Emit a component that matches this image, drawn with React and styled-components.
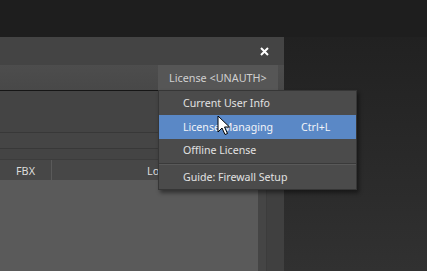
import React from "react";
import styled, { createGlobalStyle } from "styled-components";

const Global = createGlobalStyle`
  html, body { margin: 0; padding: 0; }
  body {
    width: 427px; height: 271px; overflow: hidden;
    font-family: "Noto Sans", "Open Sans", sans-serif;
  }
`;

const Page = styled.div`
  position: relative;
  width: 427px;
  height: 271px;
  display: flex;
  flex-direction: column;
  background: #1e1e1e;
  overflow: hidden;
`;

const TopGap = styled.div`
  height: 37px;
  flex: none;
`;

const Stage = styled.div`
  flex: 1;
  display: flex;
  background: linear-gradient(#212121, #313131);
`;

const Window = styled.div`
  width: 284px;
  display: flex;
  flex-direction: column;
  background: #444;
`;

const Rest = styled.div`
  flex: 1;
`;

const TitleBar = styled.div`
  height: 28px;
  display: flex;
  align-items: center;
  justify-content: flex-end;
  padding-right: 15px;
  background: #444;
`;

const Toolbar = styled.div`
  height: 25px;
  display: flex;
  justify-content: flex-end;
  padding-right: 6px;
  background: linear-gradient(#4d4d4d, #484848);
  border-bottom: 1px solid #161616;
`;

const LicenseButton = styled.div`
  width: 120px;
  display: flex;
  align-items: center;
  padding-left: 11px;
  box-sizing: border-box;
  background: #565656;
  color: #d0d0d0;
  font-size: 10.8px;
`;

const Band = styled.div`
  height: ${(p) => p.h}px;
  background: ${(p) => p.bg || "#444"};
  border-bottom: 1px solid ${(p) => p.line || "transparent"};
`;

const Header = styled.div`
  height: 20px;
  display: flex;
  background: #474747;
  border-top: 1px solid #3c3c3c;
`;

const HeaderCell = styled.div`
  width: ${(p) => p.w}px;
  display: flex;
  align-items: center;
  justify-content: ${(p) => (p.left ? "flex-start" : "center")};
  padding-left: ${(p) => p.pad || 0}px;
  box-sizing: border-box;
  border-right: 1px solid ${(p) => (p.last ? "transparent" : "#5a5a5a")};
  color: #dcdcdc;
  font-size: 10.8px;
`;

const Content = styled.div`
  flex: 1;
  display: flex;
`;

const Grid = styled.div`
  width: 259px;
  background: #5a5a5a;
`;

const Strip = styled.div`
  flex: 1;
  display: flex;
  background: #444;
`;

const StripPart = styled.div`
  width: ${(p) => p.w}px;
  background: ${(p) => p.bg};
  border-right: 1px solid ${(p) => p.line || "transparent"};
`;

const Menu = styled.div`
  position: absolute;
  left: 158px;
  top: 90px;
  width: 199px;
  box-sizing: border-box;
  padding: 1px 0 0;
  background: #4b4b4b;
  border: 1px solid #363636;
  box-shadow: 2px 3px 4px rgba(0, 0, 0, 0.45);
  display: flex;
  flex-direction: column;
`;

const Item = styled.div`
  height: ${(p) => (p.tall ? 24 : 23)}px;
  display: flex;
  align-items: center;
  padding-left: 24px;
  padding-bottom: 1px;
  box-sizing: border-box;
  background: ${(p) => (p.active ? "#5a88c6" : "transparent")};
  color: ${(p) => (p.active ? "#f2f4f8" : "#e2e2e2")};
  font-size: 10.6px;
`;

const Label = styled.span`
  width: 118px;
  white-space: nowrap;
`;

const Shortcut = styled.span`
  white-space: nowrap;
`;

const Separator = styled.div`
  height: 0;
  margin: 1px 0 1px;
  border-top: 1px solid #3a3a3a;
  border-bottom: 1px solid #595959;
`;

const Cursor = styled.svg`
  position: absolute;
  left: 217px;
  top: 115px;
`;

export default function App() {
  return (
    <Page>
      <Global />
      <TopGap />
      <Stage>
        <Window>
          <TitleBar>
            <svg width="9" height="9" viewBox="0 0 9 9">
              <path d="M1 1 L8 8 M8 1 L1 8" stroke="#ffffff" strokeWidth="2" />
            </svg>
          </TitleBar>
          <Toolbar>
            <LicenseButton>License &lt;UNAUTH&gt;</LicenseButton>
          </Toolbar>
          <Band h={41} line="#383838" />
          <Band h={15} bg="#454545" line="#383838" />
          <Band h={9} bg="#444" />
          <Header>
            <HeaderCell w={52}>FBX</HeaderCell>
            <HeaderCell w={207} left pad={95}>Location</HeaderCell>
            <HeaderCell w={25} last />
          </Header>
          <Content>
            <Grid />
            <Strip>
              <StripPart w={8} bg="#454545" line="#3c3c3c" />
              <StripPart w={16} bg="#404040" />
            </Strip>
          </Content>
        </Window>
        <Rest />
      </Stage>
      <Menu>
        <Item>
          <Label>Current User Info</Label>
        </Item>
        <Item active tall>
          <Label>License Managing</Label>
          <Shortcut>Ctrl+L</Shortcut>
        </Item>
        <Item>
          <Label>Offline License</Label>
        </Item>
        <Separator />
        <Item>
          <Label>Guide: Firewall Setup</Label>
        </Item>
      </Menu>
      <Cursor width="14" height="21" viewBox="0 0 14 21">
        <path
          d="M1 1 L1 17 L5 13 L8 19.5 L10.5 18.5 L7.5 12 L12.5 12 Z"
          fill="#ffffff"
          stroke="#000000"
          strokeWidth="1"
          strokeLinejoin="round"
        />
      </Cursor>
    </Page>
  );
}
